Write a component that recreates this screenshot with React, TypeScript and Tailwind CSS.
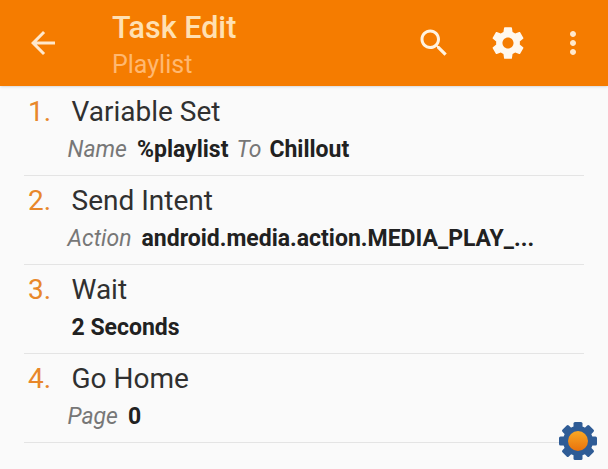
import React from 'react'

interface Step {
  title: string;
  label?: string;
  value: string;
  label2?: string;
  value2?: string;
}

const steps: Step[] = [
  { title: 'Variable Set', label: 'Name', value: '%playlist', label2: 'To', value2: 'Chillout' },
  { title: 'Send Intent', label: 'Action', value: 'android.media.action.MEDIA_PLAY_...' },
  { title: 'Wait', value: '2 Seconds' },
  { title: 'Go Home', label: 'Page', value: '0' },
];

const teeth = [0, 45, 90, 135, 180, 225, 270, 315];

const App = () => {
  return (
    <div className="w-[608px] h-[469px] bg-[#fafafa] overflow-hidden font-['Roboto',sans-serif] relative">
      <div className="h-[86px] bg-[#f57c00] flex items-center shadow-sm pl-[25px] pr-[17px]">
        <svg width="36" height="36" viewBox="0 0 24 24" fill="#ffe8cc">
          <path d="M20 11H7.83l5.59-5.59L12 4l-8 8 8 8 1.41-1.41L7.83 13H20v-2z" />
        </svg>
        <div className="ml-[51px] flex-1 pt-[4px]">
          <div className="text-[30.5px] leading-[38px] font-medium text-[#ffe0b2]">Task Edit</div>
          <div className="text-[25px] leading-[32px] mt-[2px] text-[#ffb870]">Playlist</div>
        </div>
        <svg width="36" height="36" viewBox="0 0 24 24" fill="#fff3e0">
          <path d="M15.5 14h-.79l-.28-.27C15.41 12.59 16 11.11 16 9.5 16 5.91 13.09 3 9.5 3S3 5.91 3 9.5 5.91 16 9.5 16c1.61 0 3.09-.59 4.23-1.57l.27.28v.79l5 4.99L20.49 19l-4.99-5zm-6 0C7.01 14 5 11.99 5 9.5S7.01 5 9.5 5 14 7.01 14 9.5 11.99 14 9.5 14z" />
        </svg>
        <svg width="38" height="38" viewBox="0 0 24 24" fill="#fff8ee" className="ml-[37px]">
          <path d="M19.43 12.98c.04-.32.07-.64.07-.98s-.03-.66-.07-.98l2.11-1.65c.19-.15.24-.42.12-.64l-2-3.46c-.12-.22-.39-.3-.61-.22l-2.49 1c-.52-.4-1.08-.73-1.69-.98l-.38-2.65C14.46 2.18 14.25 2 14 2h-4c-.25 0-.46.18-.49.42l-.38 2.65c-.61.25-1.17.59-1.69.98l-2.49-1c-.23-.09-.49 0-.61.22l-2 3.46c-.13.22-.07.49.12.64l2.11 1.65c-.04.32-.07.65-.07.98s.03.66.07.98l-2.11 1.65c-.19.15-.24.42-.12.64l2 3.46c.12.22.39.3.61.22l2.49-1c.52.4 1.08.73 1.69.98l.38 2.65c.03.24.24.42.49.42h4c.25 0 .46-.18.49-.42l.38-2.65c.61-.25 1.17-.59 1.69-.98l2.49 1c.23.09.49 0 .61-.22l2-3.46c.12-.22.07-.49-.12-.64l-2.11-1.65zM12 15.5c-1.93 0-3.5-1.57-3.5-3.5s1.57-3.5 3.5-3.5 3.5 1.57 3.5 3.5-1.57 3.5-3.5 3.5z" />
        </svg>
        <svg width="36" height="36" viewBox="0 0 24 24" fill="#ffe8cc" className="ml-[28.5px]">
          <path d="M12 8c1.1 0 2-.9 2-2s-.9-2-2-2-2 .9-2 2 .9 2 2 2zm0 2c-1.1 0-2 .9-2 2s.9 2 2 2 2-.9 2-2-.9-2-2-2zm0 6c-1.1 0-2 .9-2 2s.9 2 2 2 2-.9 2-2-.9-2-2-2z" />
        </svg>
      </div>
      <div className="px-[24px] pt-[1px]">
        {steps.map((s, i) => (
          <div key={s.title} className="h-[89px] border-b border-[#e4e4e4] pl-[4px] pt-[7px]">
            <div className="flex items-baseline">
              <span className="w-[43.5px] text-[28px] leading-[36px] text-[#e8872a]">{i + 1}.</span>
              <span className="text-[28px] leading-[36px] text-[#303030]">{s.title}</span>
            </div>
            <div className="flex items-baseline pl-[43.5px] mt-[5px] text-[23px] leading-[30px] whitespace-nowrap">
              {s.label && <span className="italic text-[#777777] -ml-[4px] mr-[10px]">{s.label}</span>}
              <span className="font-bold text-[#212121]">{s.value}</span>
              {s.label2 && <span className="italic text-[#777777] mx-[8px]">{s.label2}</span>}
              {s.value2 && <span className="font-bold text-[#212121]">{s.value2}</span>}
            </div>
          </div>
        ))}
      </div>
      <div className="absolute left-[558px] top-[421px]">
        <svg width="40" height="40" viewBox="0 0 40 40">
          <defs>
            <linearGradient id="sun" x1="0" y1="0" x2="0" y2="1">
              <stop offset="0" stopColor="#f9a825" />
              <stop offset="1" stopColor="#e8720c" />
            </linearGradient>
          </defs>
          <circle cx="20" cy="20" r="15" fill="#2f5c96" />
          {teeth.map((a) => (
            <rect key={a} x="15.5" y="1" width="9" height="7" rx="1.5" fill="#2f5c96" transform={`rotate(${a} 20 20)`} />
          ))}
          <circle cx="20" cy="20" r="10" fill="url(#sun)" />
        </svg>
      </div>
    </div>
  )
}

export default App
